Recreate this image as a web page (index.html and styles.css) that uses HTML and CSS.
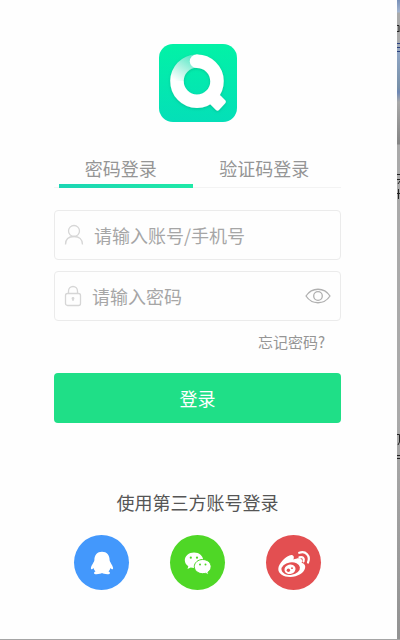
FILE: index.html
```html
<!DOCTYPE html>
<html lang="zh-CN">
<head>
<meta charset="utf-8">
<meta name="viewport" content="width=device-width, initial-scale=1">
<title>登录</title>
<link rel="stylesheet" href="styles.css">
</head>
<body>
<div class="page">
  <main class="screen">
    <svg class="logo" viewBox="0 0 78 78" aria-hidden="true">
      <defs>
        <linearGradient id="tile" x1="0" y1="0" x2="0" y2="1">
          <stop offset="0" stop-color="#02f2a6"/>
          <stop offset="1" stop-color="#04dfb8"/>
        </linearGradient>
        <linearGradient id="fade" x1="0.85" y1="0" x2="0.2" y2="1">
          <stop offset="0" stop-color="#4fe8c4"/>
          <stop offset="0.5" stop-color="#a9f2e0"/>
          <stop offset="1" stop-color="#fff"/>
        </linearGradient>
        <filter id="soft" x="-20%" y="-20%" width="140%" height="140%">
          <feDropShadow dx="0" dy="1" stdDeviation="1.5" flood-color="#06a57c" flood-opacity="0.5"/>
        </filter>
      </defs>
      <rect width="78" height="78" rx="14" fill="url(#tile)"/>
      <g filter="url(#soft)">
        <path d="M53 57 L59 51.500 Q60.500 50.500 62 52 L66.500 56.500 Q67.500 58 66.200 59.300 L60 66 Q58.500 67.300 57 66 L50 59Z" fill="#fff"/>
        <path d="M37.500 17.300 A20 20 0 1 1 18 37" fill="none" stroke="#fff" stroke-width="13.500"/>
        <path d="M11.200 37 A26.500 26.500 0 0 1 37 10.600 L37.500 23.800 A13.300 13.300 0 0 0 24.700 37Z" fill="url(#fade)"/>
        <circle cx="37.500" cy="17.300" r="6.700" fill="#fff"/>
      </g>
    </svg>

    <div class="tabs" role="tablist">
      <button class="tab tab-active" type="button" role="tab" aria-selected="true">密码登录</button>
      <button class="tab" type="button" role="tab" aria-selected="false">验证码登录</button>
    </div>

    <form class="form">
      <div class="field">
        <label class="field-icon" for="account" aria-label="账号">
          <svg width="20" height="22" viewBox="0 0 20 22"><circle cx="10" cy="7" r="5.500"/><path d="M1.500 20.500 C1.500 15 5 12.500 10 12.500 S18.500 15 18.500 20.500"/></svg>
        </label>
        <input class="input" id="account" type="text" placeholder="请输入账号/手机号">
      </div>
      <div class="field">
        <label class="field-icon" for="password" aria-label="密码">
          <svg width="18" height="22" viewBox="0 0 18 22"><rect x="1.500" y="8.500" width="15" height="12" rx="2"/><path d="M4.500 8.500 V6 A4.500 4.500 0 0 1 13.500 6 V8.500 M9 13 V16"/><circle cx="9" cy="13.500" r="0.800"/></svg>
        </label>
        <input class="input" id="password" type="password" placeholder="请输入密码">
        <button class="reveal" type="button" aria-label="显示密码">
          <svg width="26" height="16" viewBox="0 0 26 16"><path d="M1 8 C7 -1 19 -1 25 8 C19 17 7 17 1 8Z"/><circle cx="13" cy="8" r="4.300"/></svg>
        </button>
      </div>
      <a class="forgot" href="#">忘记密码?</a>
      <button class="submit" type="button">登录</button>
    </form>

    <section class="social">
      <h2 class="social-title">使用第三方账号登录</h2>
      <div class="social-list">
        <a class="social-link qq" href="#" aria-label="QQ">
          <svg viewBox="0 0 55 55"><path fill="#fff" d="M28 16.700 C23.200 16.700 20.400 20.200 20.400 25 C20.400 27 17.300 30 16.900 33 C16.900 35 18.300 34.400 19.500 33 C19.900 34.500 20.700 35.500 21.500 36.400 C19.300 37.200 19.500 39.200 22.500 39.200 C25 39.200 27 38.700 28 38 C29 38.700 31 39.200 33.500 39.200 C36.500 39.200 36.700 37.200 34.500 36.400 C35.300 35.500 36.100 34.500 36.500 33 C37.700 34.400 39.100 35 39.100 33 C38.700 30 35.600 27 35.600 25 C35.600 20.200 32.800 16.700 28 16.700Z"/></svg>
        </a>
        <a class="social-link wechat" href="#" aria-label="微信">
          <svg viewBox="0 0 55 55">
            <path fill="#fff" d="M24 17.500 C18.800 17.500 14.800 21 14.800 25.300 C14.800 27.800 16.200 29.900 18.300 31.300 L17.500 34 L20.700 32.500 C21.700 32.800 22.800 33 24 33 C29.200 33 33.200 29.600 33.200 25.300 S29.200 17.500 24 17.500Z"/>
            <path fill="#fff" stroke="#4fd726" d="M32.700 24.500 C28 24.500 24.300 27.700 24.300 31.600 S28 38.700 32.700 38.700 C33.700 38.700 34.700 38.500 35.600 38.300 L38.600 40 L37.900 37.300 C39.900 36 41.100 34 41.100 31.600 C41.100 27.700 37.400 24.500 32.700 24.500Z"/>
            <g fill="#4fd726"><circle cx="20.800" cy="22.700" r="1.100"/><circle cx="27" cy="22.700" r="1.100"/><circle cx="30" cy="29.500" r="1"/><circle cx="35.500" cy="29.500" r="1"/></g>
          </svg>
        </a>
        <a class="social-link weibo" href="#" aria-label="微博">
          <svg viewBox="0 0 55 55">
            <path fill="#fff" d="M26.500 20.300 C28.300 21 28 23 27.400 24.600 C30.500 23.200 34.500 22.500 35.700 24.400 C36.300 25.400 36.100 26.600 35.600 27.800 C38.500 28.700 39.700 30.500 39.100 33 C38.100 37.900 31.800 41.900 24.300 41.900 C17.300 41.900 12.300 38.500 12.300 33.900 C12.300 28.400 22 18.700 26.500 20.300Z"/>
            <ellipse cx="24.700" cy="33.600" rx="9.300" ry="6.200" transform="rotate(-9 24.700 33.600)" fill="#e34f51"/>
            <ellipse cx="24" cy="34.200" rx="5.600" ry="4.700" transform="rotate(-15 24 34.200)" fill="#fff"/>
            <circle cx="22.400" cy="35.300" r="1.700" fill="#e34f51"/><circle cx="26" cy="33.200" r="0.900" fill="#e34f51"/>
            <path fill="none" stroke="#fff" stroke-width="2.200" stroke-linecap="round" d="M33.200 17.800 C39.500 15.300 44.800 20.800 42 27.500 M33.500 22.400 C36.700 21.200 38.600 23.500 37.500 26.400"/>
          </svg>
        </a>
      </div>
    </section>
  </main>
  <div class="edge" aria-hidden="true">
    <svg class="edge-marks" width="3" height="640" viewBox="0 0 3 640" fill="none" stroke="#222">
      <path d="M0 25.500 H2 V32 M0 31.500 H2 M0 174.500 H3 M0 179.500 H3 M1 184 L3 181 M0 193.500 H3 M1.500 189 V199 M0 434.500 H2.500 V442 L1 445 M0 455.500 H3 M0 458.500 H3"/>
      <path stroke="#29407f" d="M0 43.500 H3 M0 47.500 H3 M0 51.500 H3"/>
    </svg>
  </div>
</div>
</body>
</html>
```
FILE: styles.css
```css
* {
  box-sizing: border-box;
}

body {
  margin: 0;
  background: #fefefe;
  color: #959595;
  font-family: "Noto Sans CJK SC", sans-serif;
  font-size: 18px;
  line-height: 24px;
}

button,
input {
  margin: 0;
  padding: 0;
  border: 0;
  background: none;
  color: inherit;
  font: inherit;
}

a {
  color: inherit;
  text-decoration: none;
}

svg {
  display: block;
}

.page {
  display: flex;
  min-height: 100vh;
  border-bottom: 1px solid #a5a5a5;
}

.screen {
  display: flex;
  flex: 1;
  flex-direction: column;
  padding: 44px 56px 0 54px;
}

.logo {
  align-self: center;
  width: 78px;
  height: 78px;
}

.tabs {
  display: grid;
  grid-template-columns: 1fr 1fr;
  margin-top: 32px;
  border-bottom: 1px solid #f3f3f3;
}

.tab {
  position: relative;
  height: 33px;
  padding: 0 10px 6px 0;
}

.tab-active::after {
  position: absolute;
  right: 5px;
  bottom: -1px;
  left: 5px;
  height: 4px;
  background: linear-gradient(90deg, #1cd6b4, #1fe9a7);
  content: "";
}

.form {
  display: flex;
  flex-direction: column;
  margin-top: 22px;
}

.field {
  display: flex;
  align-items: center;
  height: 50px;
  padding: 0 9px;
  border: 1px solid #ebebeb;
  border-radius: 4px;
}

.field + .field {
  margin-top: 11px;
}

.field-icon {
  margin-right: 10px;
}

.field-icon svg,
.reveal svg {
  fill: none;
  stroke: #d6d6d6;
  stroke-width: 1.3;
}

.reveal svg {
  stroke: #b0b0b0;
}

.input {
  flex: 1;
  min-width: 0;
  height: 48px;
  outline: 0;
}

.input::placeholder {
  color: #a6a6a6;
  opacity: 1;
}

.forgot {
  align-self: flex-end;
  margin: 9px 16px 0 0;
  font-size: 15px;
}

.submit {
  height: 50px;
  margin-top: 19px;
  border-radius: 4px;
  background: #1fdf87;
  color: #fff;
}

.social {
  display: flex;
  flex-direction: column;
  align-items: center;
  margin-top: 67px;
}

.social-title {
  margin: 0;
  color: #555;
  font-size: 18px;
  font-weight: 400;
}

.social-list {
  display: flex;
  gap: 41px;
  margin-top: 21px;
}

.social-link {
  width: 55px;
  height: 55px;
  border-radius: 50%;
}

.qq {
  background: #4398fc;
}

.wechat {
  background: #4fd726;
}

.weibo {
  background: #e34f51;
}

.edge {
  position: relative;
  width: 3px;
  background: linear-gradient(#7890b8 0, #a4b5cf 12px, #aaa 13px, #aaa 40px, #8fa5c4 54px, #7890a8 88px, #6d87b5 92px, #a9a9a9 102px, #999 120px, #858585 144px, #aaa 145px, #aaa 420px, #929292 100%);
}

.edge-marks {
  position: absolute;
  top: 0;
  left: 0;
}
```
